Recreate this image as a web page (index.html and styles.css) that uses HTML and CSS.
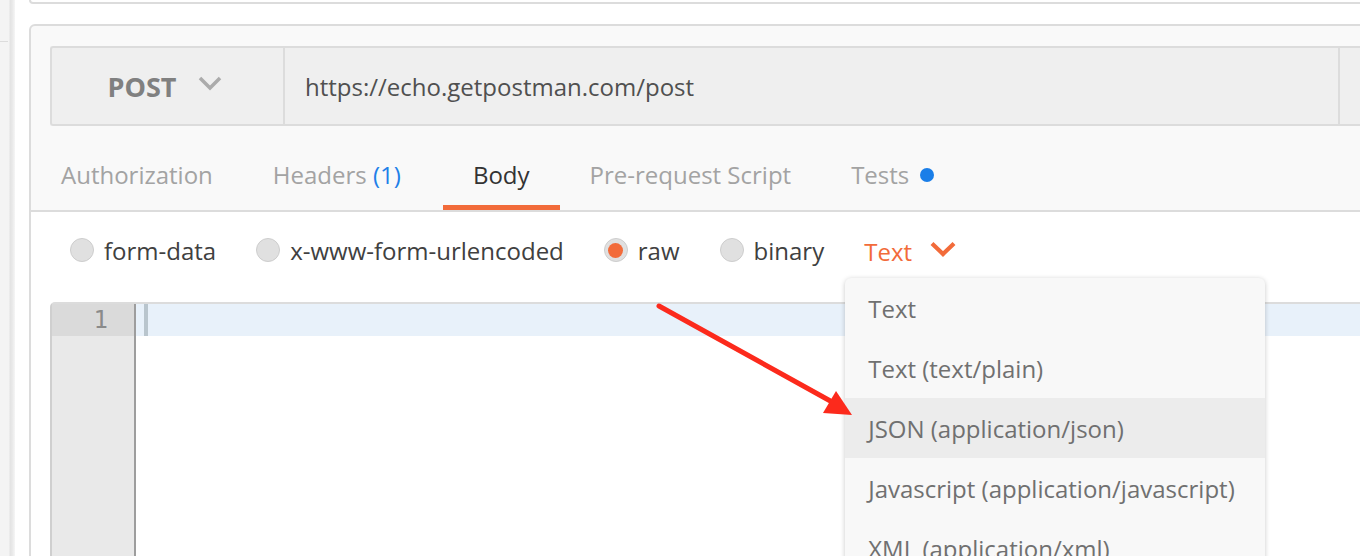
FILE: index.html
```html
<!DOCTYPE html>
<html>
<head>
<meta charset="utf-8">
<link rel="stylesheet" href="styles.css">
</head>
<body>
<div class="app">
  <aside class="sidebar"><div class="sidebar-item"></div></aside>
  <main class="main">
    <div class="top-stub"></div>
    <section class="panel">
      <div class="urlbar">
        <div class="method">
          <span class="method-name">POST</span>
          <svg class="chev" width="24" height="15" viewBox="0 0 24 15"><polyline points="2,2 12,12 22,2" fill="none" stroke="#ababab" stroke-width="3.5"/></svg>
        </div>
        <div class="url">https://echo.getpostman.com/post</div>
        <div class="send"></div>
      </div>
      <nav class="tabs">
        <div class="tab">Authorization</div>
        <div class="tab tab-headers">Headers <span class="count">(1)</span></div>
        <div class="tab active">Body</div>
        <div class="tab">Pre-request Script</div>
        <div class="tab">Tests<span class="dot"></span></div>
      </nav>
      <div class="body-area">
        <div class="radios">
          <label class="radio"><span class="circle"></span>form-data</label>
          <label class="radio"><span class="circle"></span>x-www-form-urlencoded</label>
          <label class="radio"><span class="circle checked"></span>raw</label>
          <label class="radio"><span class="circle"></span>binary</label>
          <div class="type-select">
            <span class="type-label">Text</span>
            <svg class="chev-orange" width="26" height="16" viewBox="0 0 26 16"><polyline points="2,2.5 13,13 24,2.5" fill="none" stroke="#f26b3a" stroke-width="4.2"/></svg>
            <ul class="menu">
              <li class="menu-item">Text</li>
              <li class="menu-item">Text (text/plain)</li>
              <li class="menu-item hover">JSON (application/json)</li>
              <li class="menu-item">Javascript (application/javascript)</li>
              <li class="menu-item">XML (application/xml)</li>
            </ul>
          </div>
        </div>
        <div class="editor">
          <div class="gutter">
            <div class="line-no active-no">1</div>
          </div>
          <div class="code">
            <div class="code-line active-line"><span class="cursor"></span></div>
          </div>
        </div>
      </div>
    </section>
  </main>
</div>
<svg class="annotation" width="1360" height="556" viewBox="0 0 1360 556">
  <line x1="659" y1="306" x2="834" y2="403" stroke="#fc2a1c" stroke-width="5" stroke-linecap="round"/>
  <polygon points="852,415 823,413 836,391" fill="#fc2a1c"/>
</svg>
</body>
</html>
```

FILE: styles.css
```css
* { box-sizing: border-box; }
html, body {
  margin: 0;
  padding: 0;
  width: 1360px;
  height: 556px;
  overflow: hidden;
  background: #fff;
  font-family: "Open Sans", "Liberation Sans", sans-serif;
}
.app {
  display: flex;
  height: 556px;
  position: relative;
  overflow: hidden;
}
.sidebar {
  width: 15px;
  flex-shrink: 0;
  background: linear-gradient(to right, #f4f4f4 0, #f4f4f4 9px, #e3e3e3 10px, #e8e8e8 12px, #f6f6f6 15px);
}
.sidebar-item {
  width: 8px;
  height: 42px;
  border-bottom: 1px solid #dcdcdc;
}
.main {
  flex: 1;
  padding-left: 14px;
  min-width: 0;
  overflow: hidden;
}
.top-stub {
  width: 1400px;
  height: 4px;
  border: 2px solid #dcdcdc;
  border-top: none;
  border-bottom-left-radius: 5px;
}
.panel {
  width: 1400px;
  margin-top: 20px;
  border: 2px solid #dcdcdc;
  border-radius: 6px;
  background: #f9f9f9;
  padding-top: 20px;
  height: 540px;
  overflow: hidden;
}
.urlbar {
  display: flex;
  height: 80px;
  margin-left: 19px;
  border: 2px solid #dcdcdc;
  border-right: none;
  border-radius: 3px 0 0 3px;
  background: #efefef;
}
.method {
  width: 233px;
  flex-shrink: 0;
  border-right: 2px solid #dcdcdc;
  display: flex;
  align-items: center;
  justify-content: center;
  gap: 22px;
  padding-right: 5px;
}
.method-name {
  font-weight: 700;
  font-size: 27px;
  color: #808080;
  line-height: 1;
}
.chev { display: block; margin-top: -5px; }
.url {
  width: 1053px;
  flex-shrink: 0;
  display: flex;
  align-items: center;
  padding-left: 20px;
  font-size: 24px;
  color: #505050;
}
.send {
  flex: 1;
  border-left: 2px solid #dcdcdc;
}
.tabs {
  display: flex;
  height: 86px;
  border-bottom: 2px solid #dcdcdc;
}
.tab {
  display: flex;
  align-items: center;
  padding: 13px 30px 0;
  font-size: 24px;
  color: #a3a3a3;
  white-space: pre;
}
.tab-headers { margin-right: 12px; }
.tab .count { color: #1f80e8; }
.tab.active {
  color: #333;
  box-shadow: inset 0 -5px 0 #f26b3a;
}
.dot {
  display: inline-block;
  width: 14px;
  height: 14px;
  border-radius: 50%;
  background: #1a7ee8;
  margin-left: 11px;
}
.body-area {
  background: #fff;
  padding: 0 0 0 19px;
  height: 400px;
}
.radios {
  display: flex;
  padding: 20px 0 0 20px;
  height: 90px;
  align-items: flex-start;
}
.radio {
  display: flex;
  align-items: center;
  height: 36px;
  gap: 10px;
  margin-right: 40px;
  font-size: 24px;
  color: #404040;
}
.circle {
  width: 24px;
  height: 24px;
  border-radius: 50%;
  background: #e0e0e0;
  border: 1px solid #cdcdcd;
  display: flex;
  align-items: center;
  justify-content: center;
}
.circle.checked::before {
  content: "";
  width: 15px;
  height: 15px;
  border-radius: 50%;
  background: #f26b3a;
}
.type-select {
  position: relative;
  display: flex;
  align-items: center;
  height: 36px;
  gap: 18px;
  padding-top: 3px;
}
.type-label {
  font-size: 24px;
  color: #f26b3a;
}
.chev-orange { display: block; margin-top: -6px; }
.menu {
  position: absolute;
  left: -19px;
  top: 46px;
  width: 420px;
  margin: 0;
  padding: 0;
  list-style: none;
  background: #f8f8f8;
  border-radius: 6px;
  box-shadow: 0 1px 5px rgba(0, 0, 0, 0.22);
  z-index: 5;
}
.menu-item {
  height: 60px;
  display: flex;
  align-items: center;
  padding-left: 23px;
  font-size: 24px;
  color: #707070;
}
.menu-item.hover { background: #ececec; }
.editor {
  display: flex;
  border-top: 2px solid #dcdcdc;
  border-left: 2px solid #cfcfcf;
  border-top-left-radius: 5px;
  height: 300px;
}
.gutter {
  width: 84px;
  flex-shrink: 0;
  background: #e9e9e9;
  border-right: 2px solid #9d9d9d;
}
.line-no {
  height: 32px;
  text-align: right;
  padding-right: 26px;
  font-family: "DejaVu Sans Mono", monospace;
  font-size: 24px;
  line-height: 32px;
  color: #8a8a8a;
}
.active-no { background: #dadada; }
.code { flex: 1; }
.code-line {
  height: 32px;
  padding-left: 8px;
}
.active-line { background: #e8f1fa; }
.cursor {
  display: block;
  width: 4px;
  height: 32px;
  background: #b9c5cd;
}
.annotation {
  position: absolute;
  left: 0;
  top: 0;
  pointer-events: none;
  z-index: 10;
}
```
